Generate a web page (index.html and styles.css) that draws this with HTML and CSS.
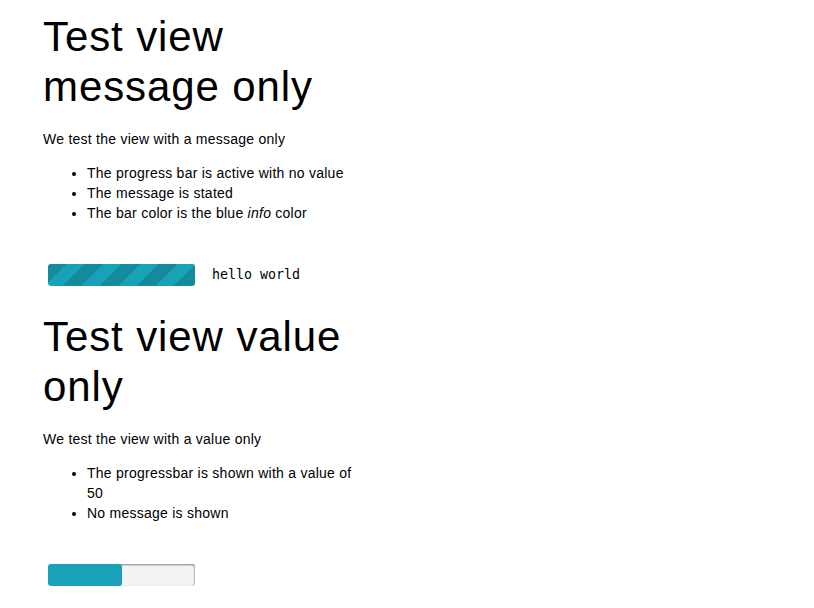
FILE: index.html
```html
<!DOCTYPE html>
<html>
<head>
<meta charset="utf-8">
<link rel="stylesheet" href="styles.css">
</head>
<body>
<div class="page">
  <section class="case">
    <h1 class="title">Test view message only</h1>
    <p class="lead">We test the view with a message only</p>
    <ul class="points">
      <li>The progress bar is active with no value</li>
      <li>The message is stated</li>
      <li>The bar color is the blue <em>info</em> color</li>
    </ul>
    <div class="bar-row">
      <div class="progress">
        <div class="progress-fill striped full"></div>
      </div>
      <code class="message">hello world</code>
    </div>
  </section>
  <section class="case">
    <h1 class="title">Test view value only</h1>
    <p class="lead">We test the view with a value only</p>
    <ul class="points">
      <li>The progressbar is shown with a value of 50</li>
      <li>No message is shown</li>
    </ul>
    <div class="bar-row">
      <div class="progress">
        <div class="progress-fill" style="width: 50%"></div>
      </div>
    </div>
  </section>
</div>
</body>
</html>
```

FILE: styles.css
```css
html, body {
  margin: 0;
  padding: 0;
  background: #ffffff;
}

body {
  font-family: "Liberation Sans", Arial, sans-serif;
  font-size: 14px;
  line-height: 20px;
  letter-spacing: 0.25px;
  color: #000000;
}

.page {
  width: 318px;
  margin-left: 43px;
  padding-top: 12px;
}

.case {
  display: flex;
  flex-direction: column;
}

.title {
  margin: 0;
  font-size: 42px;
  line-height: 50px;
  font-weight: normal;
  letter-spacing: 0.9px;
}

.lead {
  margin: 17px 0 0 0;
}

.points {
  margin: 14px 0 0 0;
  padding-left: 44px;
}

.bar-row {
  display: flex;
  align-items: center;
  gap: 17px;
  margin-top: 41px;
  margin-bottom: 26px;
  padding-left: 5px;
  height: 22px;
}

.progress {
  width: 147px;
  height: 22px;
  flex: none;
  background: #f3f3f3;
  border-radius: 3px;
  box-shadow: inset 0 1px 2px rgba(0, 0, 0, 0.45), inset -1px 0 1px rgba(0, 0, 0, 0.15);
  overflow: hidden;
  display: flex;
}

.progress-fill {
  height: 100%;
  background-color: #17a2b8;
  border-radius: 3px;
}

.progress-fill.full {
  width: 100%;
}

.progress-fill.striped {
  background-image: linear-gradient(135deg,
    rgba(0, 0, 0, 0.15) 25%, transparent 25%, transparent 50%,
    rgba(0, 0, 0, 0.15) 50%, rgba(0, 0, 0, 0.15) 75%, transparent 75%, transparent);
  background-size: 37px 37px;
}

.message {
  font-family: "DejaVu Sans Mono", "Liberation Mono", monospace;
  font-size: 13.3px;
  line-height: 20px;
  letter-spacing: 0;
  padding-bottom: 1px;
}
```
